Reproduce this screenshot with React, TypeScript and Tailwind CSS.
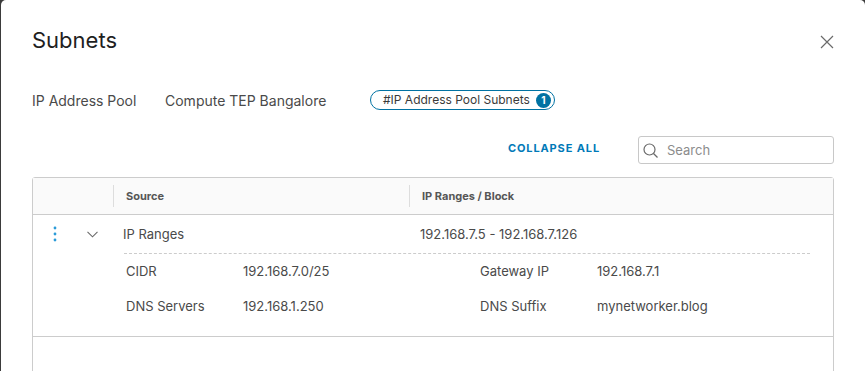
const font = { fontFamily: "Inter, 'Noto Sans', sans-serif" };

function CloseIcon() {
    return (
        <svg width="14" height="14" viewBox="0 0 14 14" className="mt-[9px]">
            <path d="M1 1L13 13M13 1L1 13" stroke="#6a6a6a" strokeWidth="1.2" />
        </svg>
    );
}

function SearchIcon() {
    return (
        <svg width="18" height="18" viewBox="0 0 18 18">
            <circle cx="7.5" cy="7.5" r="5.5" fill="none" stroke="#6a6a6a" strokeWidth="1.2" />
            <path d="M11.5 11.5L15.5 15.5" stroke="#6a6a6a" strokeWidth="1.3" />
        </svg>
    );
}

function DotsIcon() {
    return (
        <svg width="4" height="16" viewBox="0 0 4 16">
            <circle cx="2" cy="2" r="1.4" fill="#2b9bd8" />
            <circle cx="2" cy="8" r="1.4" fill="#2b9bd8" />
            <circle cx="2" cy="14" r="1.4" fill="#2b9bd8" />
        </svg>
    );
}

function ChevronIcon() {
    return (
        <svg width="11" height="7" viewBox="0 0 11 7">
            <path d="M0.5 0.8L5.5 5.8L10.5 0.8" fill="none" stroke="#6a6a6a" strokeWidth="1.1" />
        </svg>
    );
}

const details = [
    { label: "CIDR", value: "192.168.7.0/25", label2: "Gateway IP", value2: "192.168.7.1", h: "h-[35px]" },
    { label: "DNS Servers", value: "192.168.1.250", label2: "DNS Suffix", value2: "mynetworker.blog", h: "h-[36px]" },
];

export default function App() {
    return (
        <div className="h-[371px] w-[865px] overflow-hidden bg-[#3b3b3b] pl-px" style={font}>
            <div className="h-full rounded-t-[5px] bg-white pl-[31px] pr-[31px] pt-[26px]">
                <div className="flex items-start justify-between">
                    <h2 className="text-[22px] leading-[28px] text-[#1f1f1f]">Subnets</h2>
                    <CloseIcon />
                </div>

                <div className="mt-[36px] flex h-[20px] items-center text-[14px] leading-[20px] text-[#4a4a4a]">
                    <span className="w-[133px] translate-y-px">IP Address Pool</span>
                    <span className="w-[205px] translate-y-px">Compute TEP Bangalore</span>
                    <span className="flex h-[20px] items-center rounded-full border border-[#0072a3] pl-[12px] pr-[3px] text-[12px] text-[#3a3a3a]">
                        #IP Address Pool Subnets
                        <span className="ml-[6px] flex h-[15px] w-[15px] items-center justify-center rounded-full bg-[#0072a3] text-[10px] font-bold leading-none text-white">
                            1
                        </span>
                    </span>
                </div>

                <div className="mt-[26px] flex h-[28px] items-center justify-end">
                    <span className="-translate-y-[2px] text-[11px] font-bold tracking-[0.08em] text-[#0079b8]">COLLAPSE ALL</span>
                    <div className="ml-[38px] flex h-[28px] w-[196px] items-center rounded-[3px] border border-[#c8c8c8] pl-[3px] pt-[2px]">
                        <SearchIcon />
                        <span className="ml-[7px] text-[13px] text-[#8c8c8c]">Search</span>
                    </div>
                </div>

                <div className="mt-[13px] h-[220px] rounded-t-[3px] border border-[#cccccc]">
                    <div className="flex h-[37px] items-center border-b border-[#cccccc] bg-[#fafafa] text-[11px] font-bold text-[#565656]">
                        <div className="w-[80px]" />
                        <div className="flex h-[22px] w-[296px] items-center border-l border-[#dddddd] pl-[12px]">Source</div>
                        <div className="flex h-[22px] flex-1 items-center border-l border-[#dddddd] pl-[12px]">IP Ranges / Block</div>
                    </div>

                    <div className="border-b border-[#cccccc] text-[13px] text-[#4a4a4a]">
                        <div className="flex h-[38px] items-center">
                            <div className="flex w-[80px] items-center">
                                <span className="ml-[20px] flex">
                                    <DotsIcon />
                                </span>
                                <span className="ml-[30px] flex">
                                    <ChevronIcon />
                                </span>
                            </div>
                            <div className="w-[296px] translate-y-px pl-[10px]">IP Ranges</div>
                            <div className="translate-y-px pl-[11px]">192.168.7.5 - 192.168.7.126</div>
                        </div>
                        <div className="ml-[91px] mr-[23px] border-t border-dashed border-[#cccccc]" />
                        {details.map((d) => (
                            <div key={d.label} className={`ml-[93px] flex items-center ${d.h}`}>
                                <span className="w-[117px]">{d.label}</span>
                                <span className="w-[237px]">{d.value}</span>
                                <span className="w-[117px]">{d.label2}</span>
                                <span>{d.value2}</span>
                            </div>
                        ))}
                        <div className="h-[11px]" />
                    </div>
                </div>
            </div>
        </div>
    );
}
